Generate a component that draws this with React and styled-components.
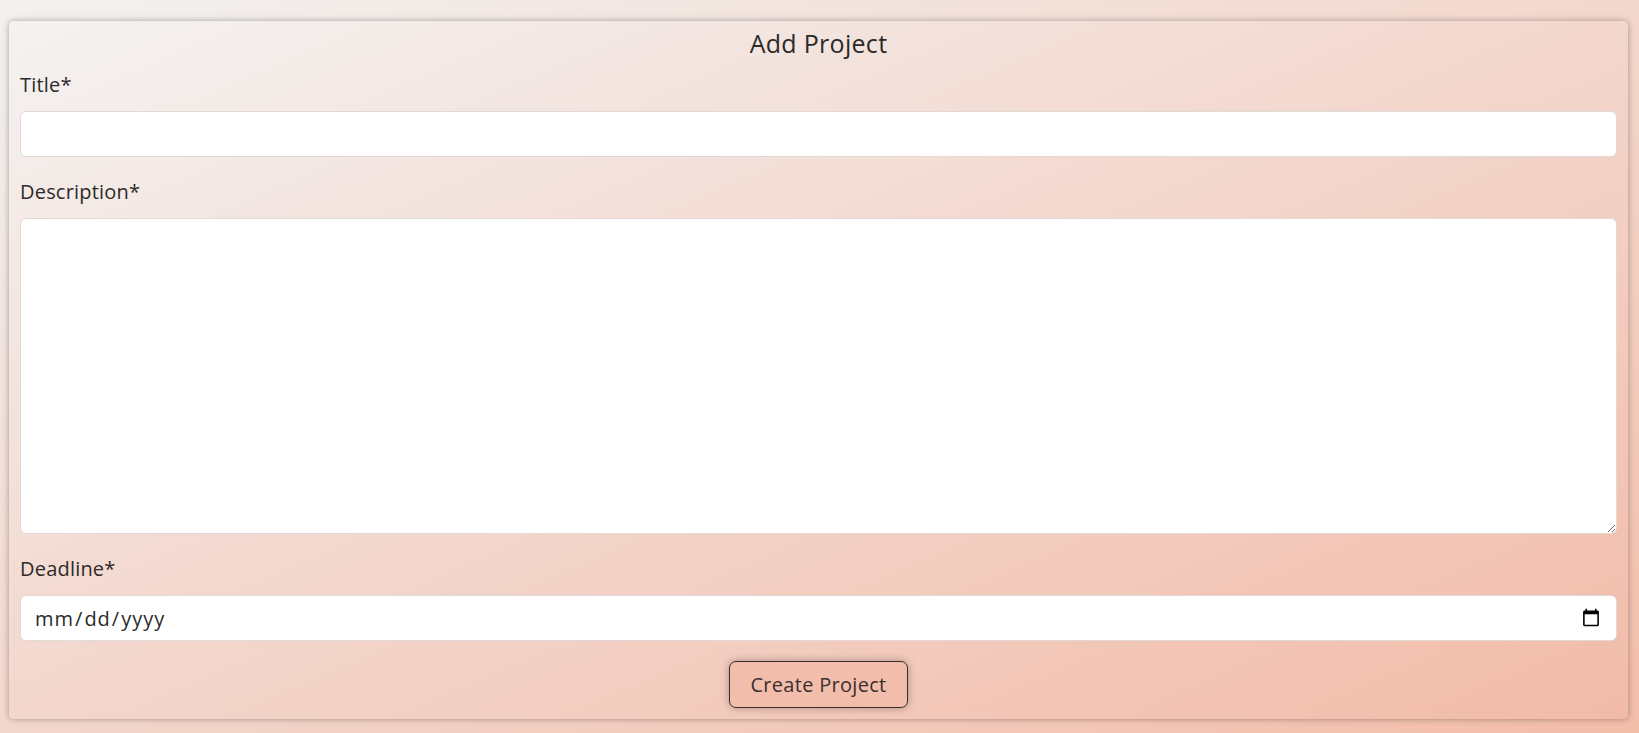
import React from 'react';
import styled, { createGlobalStyle } from 'styled-components';

const GlobalStyle = createGlobalStyle`
  html, body {
    margin: 0;
    padding: 0;
  }

  body {
    min-height: 100vh;
    font-family: "Open Sans", "Liberation Sans", sans-serif;
    background: linear-gradient(to bottom right, #f2f1f0, #f3bda9);
    color: #2b2b2b;
  }
`;

const Page = styled.main`
  padding: 21px 11px 10px 9px;
`;

const Card = styled.form`
  display: flex;
  flex-direction: column;
  padding: 5px 11px 11px;
  border-radius: 5px;
  background: linear-gradient(to bottom right, #f4f2f1, #f2bba8);
  box-shadow: 0 0 6px rgba(0, 0, 0, 0.32);
`;

const Heading = styled.h2`
  margin: 0 0 10px;
  text-align: center;
  font-size: 25px;
  font-weight: 500;
  line-height: 34px;
  letter-spacing: 0.3px;
  color: #2a2a2a;
`;

const Field = styled.div`
  display: flex;
  flex-direction: column;
  gap: 11px;
  margin-bottom: 20px;
`;

const Label = styled.label`
  font-size: 20px;
  line-height: 30px;
  letter-spacing: 0.2px;
  color: #2e2a2a;
`;

const inputBase = `
  box-sizing: border-box;
  width: 100%;
  border: 1px solid #e2d9d6;
  border-radius: 6px;
  background: #fff;
  font-family: inherit;
  font-size: 20px;
  color: #2b2b2b;
  outline: none;
`;

const TextInput = styled.input`
  ${inputBase}
  height: 46px;
  padding: 0 13px;
`;

const TextArea = styled.textarea`
  ${inputBase}
  display: block;
  height: 316px;
  padding: 10px 13px;
  resize: vertical;
`;

const DateInput = styled.input`
  ${inputBase}
  height: 46px;
  padding: 0 13px;
  letter-spacing: 1px;
`;

const Actions = styled.div`
  display: flex;
  justify-content: center;
`;

const Button = styled.button`
  height: 47px;
  padding: 0 20px;
  border: 1px solid #3a2d2b;
  border-radius: 7px;
  background: #f2bdab;
  font-family: inherit;
  font-size: 20px;
  letter-spacing: 0.3px;
  color: #3b302e;
  box-shadow: 0 0 8px rgba(0, 0, 0, 0.3);
  cursor: pointer;
`;

export default function App() {
  return (
    <>
      <GlobalStyle />
      <Page>
        <Card onSubmit={e => e.preventDefault()}>
          <Heading>Add Project</Heading>
          <Field>
            <Label htmlFor="title">Title*</Label>
            <TextInput id="title" type="text" />
          </Field>
          <Field>
            <Label htmlFor="description">Description*</Label>
            <TextArea id="description" />
          </Field>
          <Field>
            <Label htmlFor="deadline">Deadline*</Label>
            <DateInput id="deadline" type="date" />
          </Field>
          <Actions>
            <Button type="submit">Create Project</Button>
          </Actions>
        </Card>
      </Page>
    </>
  );
}
